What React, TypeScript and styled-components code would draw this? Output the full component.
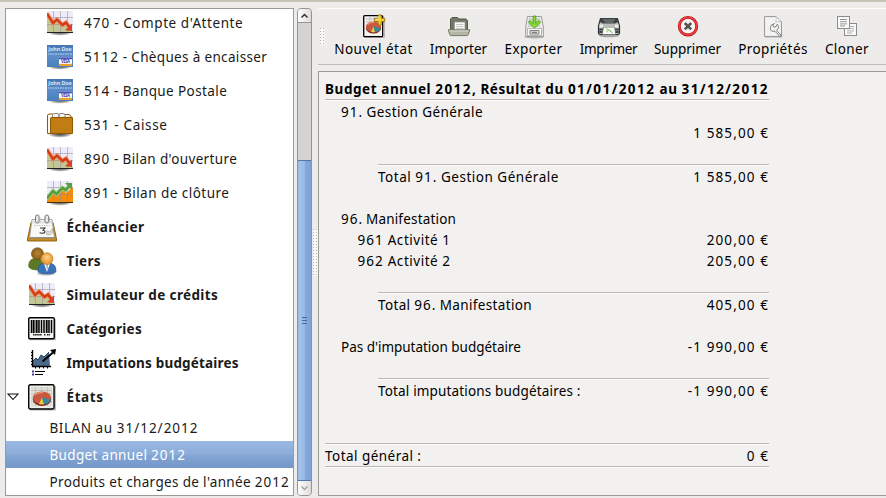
import React from 'react';
import styled, { createGlobalStyle, css } from 'styled-components';

const GlobalStyle = createGlobalStyle`
  * { box-sizing: border-box; }
  body { margin: 0; background: #edeceb; overflow: hidden; }
`;

const Window = styled.div`
  display: flex;
  width: 886px;
  height: 498px;
  padding: 6px 0 2px 5px;
  border-top: 2px solid #c5c2b8;
  background: #edeceb;
  font: 13.5px/21px "Noto Sans", "Open Sans", sans-serif;
  color: #000;
  white-space: pre;
`;

/* ---------- text ---------- */

const Tracked = styled.span<{ $track: number }>`
  letter-spacing: ${(p) => p.$track}px;
`;

type LabelProps = { text: string; track?: number; digits?: number };

function Label({ text, track = 0, digits = 1 }: LabelProps) {
  return (
    <span>
      {text.split(/([\d/]+)/).map((part, i) => (
        <Tracked key={i} $track={i % 2 ? digits : track}>{part}</Tracked>
      ))}
    </span>
  );
}

/* ---------- icons ---------- */

const Shadow = ({ cx = 13, cy = 21 }: { cx?: number; cy?: number }) => (
  <>
    <defs>
      <radialGradient id="shade">
        <stop offset="0" stopColor="#000" stopOpacity=".75" />
        <stop offset=".6" stopColor="#000" stopOpacity=".4" />
        <stop offset="1" stopColor="#000" stopOpacity="0" />
      </radialGradient>
    </defs>
    <ellipse cx={cx} cy={cy} rx="12.5" ry="3.8" fill="url(#shade)" />
  </>
);

const ChartGrid = () => (
  <path d="M6.5 0V21M13.5 0V21M20.5 0V21M0 6.5H26M0 13.5H26" stroke="#8a8896" strokeWidth=".8" opacity=".65" />
);

const ChartDown = () => (
  <svg width="26" height="25" viewBox="0 0 26 25">
    <Shadow />
    <rect width="26" height="22" fill="#efecfa" />
    <path d="M0 3L6 13L10 9L16 15L19 13L26 20V22H0Z" fill="#c3c795" />
    <ChartGrid />
    <path d="M0 2.5L6 12L10 8.5L15.5 14L19 11.5L23 17" fill="none" stroke="#ee8a62" strokeWidth="4" />
    <path d="M0 2.5L6 12L10 8.5L15.5 14L19 11.5L23 17" fill="none" stroke="#d33a12" strokeWidth="2.2" />
    <path d="M25 12.5L25 20L18 19.3Z" fill="#dd3f28" />
    <rect y="21" width="26" height="1" fill="#222" />
  </svg>
);

const ChartUp = () => (
  <svg width="26" height="25" viewBox="0 0 26 25">
    <Shadow />
    <rect width="26" height="22" fill="#efecfa" />
    <path d="M0 19L6 12L10 14.5L16 8.5L19 12L26 6V22H0Z" fill="#f58c0a" />
    <ChartGrid />
    <path d="M0 17.5L6 10L9.5 13L15.5 7L18.5 9L23 4.5" fill="none" stroke="#9ccb7d" strokeWidth="4.2" />
    <path d="M0 17.5L6 10L9.5 13L15.5 7L18.5 9L23 4.5" fill="none" stroke="#529a3b" strokeWidth="2.2" />
    <path d="M18 2H25V9Z" fill="#57a040" />
    <rect y="21" width="26" height="1" fill="#4a3312" />
  </svg>
);

const CardText = styled.text`
  font-family: "Noto Sans", sans-serif;
  font-weight: 700;
`;

const BankCard = () => (
  <svg width="26" height="25" viewBox="0 0 26 25">
    <defs>
      <linearGradient id="card" x1="0" y1="0" x2="0" y2="1">
        <stop offset="0" stopColor="#4577b5" />
        <stop offset=".5" stopColor="#5b8dca" />
        <stop offset="1" stopColor="#4a80b7" />
      </linearGradient>
    </defs>
    <Shadow />
    <rect width="26" height="22" fill="url(#card)" />
    <CardText x="1.3" y="5.6" fontSize="5.4" fill="#d3e6fa" textLength="23.5">John Doe</CardText>
    <path d="M1 9H25" stroke="#a9c6e6" strokeWidth="2" strokeDasharray="1.4 .7 2.2 .6" opacity=".65" />
    <rect x="12" y="12.5" width="13" height="8.5" fill="#fff" />
    <rect x="12" y="12.5" width="13" height="1.8" fill="#514fb5" />
    <rect x="12" y="18.8" width="13" height="2.2" fill="#eaa12c" />
    <CardText x="14" y="18.4" fontSize="4.4" fill="#3c3aa8" textLength="9">VISA</CardText>
  </svg>
);

const Wallet = () => (
  <svg width="26" height="25" viewBox="0 0 26 25">
    <Shadow />
    <path d="M.5 20.5V2L2 1H6V20.5Z" fill="#fffaf0" stroke="#8f5905" />
    <path d="M5.5 4V1.5L7 .5H11L12 2V4M12 4V1L13 .5H17L18 2V4" fill="#f2f2f2" stroke="#898989" />
    <path d="M18 1.5H22L24 3V5" fill="#fff3d5" stroke="#8f5905" />
    <path d="M3.5 20.5V5L5 4.5H25.5V20.5Z" fill="#c17d11" stroke="#8f5902" />
  </svg>
);

const Calendar = () => (
  <svg width="30" height="29" viewBox="0 0 30 29">
    <path d="M4 9.5H26L29.5 26V28H.5V26Z" fill="#c98a1f" stroke="#8d5a0a" strokeWidth=".9" />
    <path d="M5 6.5H25L27.5 24.5H2.5Z" fill="#f9f9f7" stroke="#8e8e8a" strokeWidth=".8" />
    <path d="M5 8H25L25.4 10.5H4.6Z" fill="#e0e0de" />
    <path d="M2.8 24.5H27.2V25.6H2.6Z" fill="#8d8c88" />
    <g stroke="#777" fill="#e9e9e9">
      <rect x="8.5" y="2" width="3.6" height="8" rx="1.8" />
      <rect x="18" y="2" width="3.6" height="8" rx="1.8" />
    </g>
    <path d="M12.8 4V9M22.3 4V9" stroke="#b3b3b3" />
    <path d="M7 12.5H23" stroke="#aaa" strokeDasharray="1.5 1" strokeWidth=".7" />
    <path d="M13 15H18L16 17.2Q19 18 17.5 19.7Q15.5 20.6 12.6 19.8" fill="none" stroke="#333" strokeWidth="1.1" />
    <path d="M19.5 21.5L20 17.5L22.5 19L25.5 15.5V20Q24 22.5 19.5 21.5Z" fill="#dedfda" stroke="#aaa" strokeWidth=".7" />
  </svg>
);

const People = () => (
  <svg width="29" height="29" viewBox="0 0 29 29">
    <defs>
      <radialGradient id="face" cx=".5" cy=".4"><stop offset="0" stopColor="#ffd38a" /><stop offset="1" stopColor="#e79a35" /></radialGradient>
      <radialGradient id="faceDark" cx=".5" cy=".45"><stop offset="0" stopColor="#b88739" /><stop offset="1" stopColor="#895f18" /></radialGradient>
    </defs>
    <ellipse cx="18" cy="26.6" rx="9" ry="2" fill="#000" opacity=".25" />
    <path d="M.8 20C.4 14 3 11.5 8 11.5C13 11.5 16 14 16 22.5C10 23.5 3 23.2 .8 20Z" fill="#5c7a26" stroke="#49631a" strokeWidth=".7" />
    <circle cx="9.5" cy="6.8" r="6" fill="url(#faceDark)" stroke="#76500e" strokeWidth=".7" />
    <path d="M10.2 25C9.5 18 12.5 16 19 16C25.5 16 28.3 18.5 27.8 25C24 27.5 14 27.5 10.2 25Z" fill="#3972b9" stroke="#24508f" strokeWidth=".7" />
    <path d="M16 16.5L19 25L22 16.5Z" fill="#fff" />
    <path d="M18.2 17.5H20L19.4 24Z" fill="#7aa1d4" />
    <circle cx="19" cy="11.7" r="5.9" fill="url(#face)" stroke="#c27c1e" strokeWidth=".8" />
  </svg>
);

const Barcode = () => (
  <svg width="28" height="24" viewBox="0 0 28 24">
    <path d="M27.4 2V22.6H2" fill="none" stroke="#999" strokeWidth="1.2" opacity=".6" />
    <rect x=".75" y=".75" width="25.5" height="21" rx="1.2" fill="#f5f5f3" stroke="#000" strokeWidth="1.4" />
    <path d="M3.5 3V16M5.5 3V16M8.5 3V16M11 3V16M13.5 3V16M16 3V16M18.5 3V16M21 3V16M23.5 3V16" stroke="#000" strokeWidth="1.5" />
    <path d="M6.8 3V16M9.8 3V16M19.8 3V16" stroke="#000" strokeWidth=".7" />
    <path d="M5 17.8H14M16 17.8H17.5M19 17.8H22" stroke="#222" strokeWidth="1.6" strokeDasharray="1.6 .5" />
  </svg>
);

const BudgetChart = () => (
  <svg width="30" height="28" viewBox="-4 0 30 28">
    <path d="M2 17V12L5 9L7 11L10 6L13 8L18 3L19 17Z" fill="#4b6a8b" />
    <path d="M2 12L5 9L7 11L10 6L13 8L18 3" fill="none" stroke="#26415f" />
    <path d="M1.5 1V17.5H20" fill="none" stroke="#000" strokeWidth="1.4" />
    <path d="M0 3.5H1.5M0 6.5H1.5M0 9.5H1.5M0 12.5H1.5M0 15.5H1.5M4.5 18V19.5M8.5 18V19.5M12.5 18V19.5M16.5 18V19.5" stroke="#000" />
    <path d="M11.5 12.5L22 3.5" stroke="#000" strokeWidth="2" />
    <path d="M19 1L25 0L24 6Z" fill="#000" />
    <path d="M1 22.5H3M1 25.5H3" stroke="#4c3c93" strokeWidth="1.8" />
    <path d="M4 22.5H14M4 25.5H12" stroke="#000" strokeWidth="1.1" />
  </svg>
);

const PieBody = () => (
  <>
    <ellipse cx="14" cy="15.5" rx="9.2" ry="6.5" fill="#86271b" />
    <ellipse cx="14" cy="13.7" rx="9.2" ry="6.3" fill="#cb583c" />
    <path d="M14 13.5L11 20Q13 20.8 16 20.3Z" fill="#edc94e" />
    <path d="M14 13.5L16 20.3Q21.5 19.5 22.8 15.5Z" fill="#2f8b9d" />
    <path d="M7 11Q10 8 15 8.6" fill="none" stroke="#e59377" strokeWidth="1.3" />
  </>
);

const PieReport = () => (
  <svg width="28" height="27" viewBox="0 0 28 27">
    <path d="M27.3 2V25.8H2" fill="none" stroke="#888" strokeWidth="1.3" opacity=".6" />
    <rect x=".75" y=".75" width="25.3" height="24.2" rx="1.4" fill="#eeeeeb" stroke="#000" strokeWidth="1.4" />
    <rect x="3" y="3" width="21" height="19.5" fill="#deded9" />
    <path d="M3 6.5H24M3 10H24M3 14H24M3 18H24M7.5 3V22M13.5 3V22M19.5 3V22" stroke="#bcbcb7" strokeWidth=".8" />
    <PieBody />
  </svg>
);

const NewReport = () => (
  <svg width="24" height="25" viewBox="0 0 24 25">
    <path d="M2.5 23.5H22.5V5" fill="none" stroke="#999" opacity=".6" />
    <rect x="1.7" y="1.7" width="19" height="21" rx="1" fill="#f2f2f0" stroke="#000" strokeWidth="1.3" />
    <path d="M4 5H13M4 8H15M8 3V10M12 3V9" stroke="#bbb" />
    <g transform="translate(0 1.5) scale(.82)"><PieBody /></g>
    <path d="M16 1.5H19V4.8H22.5V8H19V11.5H16V8H12.5V4.8H16Z" fill="#f7cf32" stroke="#9c7200" strokeWidth=".9" transform="translate(.2 -.5)" />
    <path d="M16.8 2.2V5.4H13.5" fill="none" stroke="#fff1a0" strokeWidth=".8" />
  </svg>
);

const ImportFolder = () => (
  <svg width="24" height="25" viewBox="0 0 24 25">
    <path d="M3.5 18V5L5 3.5H10.5L12 5H19L20.5 6.5V18Z" fill="#73776a" stroke="#555949" />
    <path d="M7.5 8H18V19H7.5Z" fill="#fafafa" stroke="#999b90" strokeWidth=".8" />
    <path d="M9 10.5H16.5M9 12.5H16.5M9 14.5H16.5" stroke="#c0c1bd" strokeWidth=".9" />
    <path d="M1.2 15.8H22.8L21.3 20.5Q21 21.6 20 21.6H4Q3 21.6 2.7 20.5Z" fill="#b3b6a3" stroke="#777a69" />
    <path d="M2.5 17H21.5" stroke="#dadbcf" />
  </svg>
);

const ExportDrive = () => (
  <svg width="24" height="25" viewBox="0 0 24 25">
    <ellipse cx="12.5" cy="23" rx="10" ry="1.5" fill="#000" opacity=".25" />
    <path d="M5.5 2.5H19.5L21.3 13V22.5H3.7V13Z" fill="#ecebe9" stroke="#9d9e9a" />
    <path d="M7 4H18V13H6Z" fill="#cfcfcd" />
    <rect x="5.5" y="14.5" width="14" height="7" fill="#f7f7f6" stroke="#aaaba7" strokeWidth=".8" />
    <path d="M8 16.5H17V20H8Z" fill="#e0e0de" stroke="#666" strokeWidth=".8" />
    <path d="M10 18.3H15" stroke="#666" />
    <path d="M11.2 2H13.8V9.6L17.2 6.6L18.6 8.2L12.5 14L6.4 8.2L7.8 6.6L11.2 9.6Z" fill="#85dd36" stroke="#49a506" strokeWidth=".9" />
  </svg>
);

const Printer = () => (
  <svg width="24" height="25" viewBox="0 0 24 25">
    <ellipse cx="12" cy="21.5" rx="10" ry="1.8" fill="#000" opacity=".3" />
    <path d="M3.5 4.5H20.5L22.5 12V19Q22.5 20.5 21 20.5H3Q1.5 20.5 1.5 19V12Z" fill="#babdb9" stroke="#2f3335" strokeWidth="1.2" />
    <path d="M3 4H21V8L18 9.5H6L3 8Z" fill="#3b4042" />
    <path d="M6 6H18M7.5 8H16.5" stroke="#93999a" strokeWidth=".9" />
    <path d="M2.5 10.5H6V12H18V10.5H21.5V13.5H2.5Z" fill="#ececeb" />
    <path d="M2.2 15.5H6M18 15.5H21.8M2.2 18H6M18 18H21.8" stroke="#3e4244" strokeWidth="2" />
    <path d="M6.5 13H17.5L18.8 20.5H5.2Z" fill="#f8fcf4" stroke="#676a68" strokeWidth=".8" />
    <path d="M9 14.5L13 16.5L15.5 19M9.5 18L11 16.5" stroke="#a5d48b" strokeWidth="1.2" />
  </svg>
);

const DeleteCircle = () => (
  <svg width="24" height="25" viewBox="0 0 24 25">
    <circle cx="12" cy="12.2" r="8.8" fill="#f7f4f3" stroke="#b80f16" strokeWidth="2.9" />
    <circle cx="12" cy="12.2" r="8.8" fill="none" stroke="#ee3c3c" strokeWidth="1.7" />
    <path d="M8.8 9L15.2 15.4M15.2 9L8.8 15.4" stroke="#555753" strokeWidth="2.6" />
  </svg>
);

const PropertiesSheet = () => (
  <svg width="24" height="25" viewBox="0 0 24 25">
    <path d="M4 23H21.5" stroke="#aaa" strokeWidth="1.4" opacity=".6" />
    <path d="M3.5 2.5H15L20.5 8V22.5H3.5Z" fill="#ececea" stroke="#9c9d9a" />
    <path d="M5 4H14.5L19 8.5V21H5Z" fill="#f7f7f6" opacity=".7" />
    <path d="M15 2.5Q15.8 6 14.7 8Q18 6.9 20.5 8Z" fill="#fff" stroke="#b0b1ad" strokeWidth=".7" />
    <path d="M13.5 9.5L11.8 11.2L13 13.2L15.2 12.5L16.2 10.2Q19.4 13.5 15.4 16.6L20.2 21.1L18.8 22.3L13.8 17.2Q9.4 18.3 9.2 14Q9.4 10.4 13.5 9.5Z" fill="#f0f0ef" stroke="#777975" strokeWidth=".9" />
  </svg>
);

const CloneSheets = () => (
  <svg width="24" height="25" viewBox="0 0 24 25">
    <rect x="9.5" y="9.5" width="12" height="12" fill="#fafafa" stroke="#8c8d8a" />
    <path d="M12 12.5H19M12 14.7H19M12 16.9H19M12 19H17" stroke="#a5a6a3" strokeWidth=".9" />
    <rect x="2.5" y="2.5" width="12" height="12" fill="#fafafa" stroke="#8c8d8a" />
    <path d="M5 5.5H12M5 7.7H12M5 9.9H12M5 11.9H10" stroke="#8b8c89" strokeWidth=".9" />
  </svg>
);

/* ---------- navigation tree ---------- */

const TreePanel = styled.nav`
  width: 289px;
  height: 488px;
  border: 1px solid #9c9a96;
  background: #fff;
  overflow: hidden;
  color: #1a1a1a;
`;

const TreeList = styled.div`
  margin-top: -3px;
`;

const TreeRow = styled.div<{ $section?: boolean }>`
  display: flex;
  align-items: center;
  height: 34px;
  padding-left: ${(p) => (p.$section ? 1 : 41)}px;
  ${(p) => p.$section && css`font-weight: 700;`}
`;

const IconCell = styled.span<{ $wide?: boolean }>`
  display: flex;
  flex: none;
  justify-content: center;
  width: ${(p) => (p.$wide ? 30 : 26)}px;
  margin-right: ${(p) => (p.$wide ? 9.5 : 11)}px;
  svg { display: block; }
`;

const Expander = styled.span`
  display: flex;
  flex: none;
  width: 20px;
  svg { display: block; }
`;

const ReportRow = styled.div<{ $selected?: boolean }>`
  display: flex;
  align-items: center;
  height: 27px;
  padding: 2px 0 0 43.5px;
  ${(p) => p.$selected && css`
    color: #fff;
    background: linear-gradient(#9ab8e2, #8bacd9 50%, #84a6d5 50%, #7397ca);
  `}
`;

const accounts = [
  { icon: <ChartDown />, text: "470 - Compte d'Attente", track: 0.57 },
  { icon: <BankCard />, text: '5112 - Chèques à encaisser', track: 0.34 },
  { icon: <BankCard />, text: '514 - Banque Postale', track: 0.4 },
  { icon: <Wallet />, text: '531 - Caisse', track: 0.65 },
  { icon: <ChartDown />, text: "890 - Bilan d'ouverture", track: 0.36 },
  { icon: <ChartUp />, text: '891 - Bilan de clôture', track: 0.47 },
];

const sections = [
  { icon: <Calendar />, text: 'Échéancier', track: 0.48 },
  { icon: <People />, text: 'Tiers', track: 0.36 },
  { icon: <ChartDown />, text: 'Simulateur de crédits', track: 0.37 },
  { icon: <Barcode />, text: 'Catégories', track: 0.3 },
  { icon: <BudgetChart />, text: 'Imputations budgétaires', track: 0.18 },
  { icon: <PieReport />, text: 'États', track: 0.6, open: true },
];

const reports = [
  { text: 'BILAN au 31/12/2012', track: 0.55 },
  { text: 'Budget annuel 2012', track: 0.33, selected: true },
  { text: "Produits et charges de l'année 2012", track: 0.34 },
];

/* ---------- scrollbar and splitter ---------- */

const Scrollbar = styled.div`
  display: flex;
  flex-direction: column;
  width: 15px;
  height: 488px;
  margin-left: 3px;
  border: 1px solid #96948f;
  border-radius: 4px;
  background: #d5d4d2;
  overflow: hidden;
`;

const ScrollButton = styled.div<{ $bottom?: boolean }>`
  display: flex;
  align-items: center;
  justify-content: center;
  height: 14px;
  flex: none;
  background: linear-gradient(90deg, #fdfdfd, #dedddb);
  border: 0 solid #96948f;
  border-bottom-width: ${(p) => (p.$bottom ? 0 : 1)}px;
`;

const ScrollTrack = styled.div`
  flex: 1;
`;

const ScrollThumb = styled.div`
  display: flex;
  align-items: center;
  justify-content: center;
  height: 321px;
  margin: 0 -1px;
  border: 1px solid #4f78ab;
  background: linear-gradient(90deg, #93b5e1, #a5c2e8 12%, #98b9e3 50%, #86aadb 52%, #7da2d6);
`;

const Splitter = styled.div`
  display: flex;
  align-items: center;
  justify-content: center;
  width: 6px;
  svg { display: block; flex: none; margin-top: 1px; }
`;

const dotPattern = (id: string) => (
  <pattern id={id} width="3" height="3" patternUnits="userSpaceOnUse">
    <rect width="3" height="3" fill="#f8f7f6" />
    <rect width="1" height="1" fill="#b5b3af" />
  </pattern>
);

/* ---------- toolbar ---------- */

const Main = styled.main`
  display: flex;
  flex: 1;
  flex-direction: column;
  gap: 6px;
  height: 488px;
`;

const Toolbar = styled.div`
  display: flex;
  flex: none;
  gap: 17px;
  height: 57px;
  padding-top: 5px;
  border-top: 1px solid #fbfbfa;
  border-bottom: 1px solid #bdbbb7;
`;

const Grip = styled.span`
  width: 6px;
  margin: 14px -9px 0 2px;
  svg { display: block; }
`;

const ToolButton = styled.div<{ $width: number }>`
  display: flex;
  flex: none;
  flex-direction: column;
  align-items: center;
  width: ${(p) => p.$width}px;
  svg { display: block; }
`;

const tools = [
  { icon: <NewReport />, text: 'Nouvel état', track: 0.5, width: 79 },
  { icon: <ImportFolder />, text: 'Importer', track: 0, width: 57 },
  { icon: <ExportDrive />, text: 'Exporter', track: 0.4, width: 59 },
  { icon: <Printer />, text: 'Imprimer', track: -0.35, width: 57 },
  { icon: <DeleteCircle />, text: 'Supprimer', track: 0, width: 67 },
  { icon: <PropertiesSheet />, text: 'Propriétés', track: 0.4, width: 70 },
  { icon: <CloneSheets />, text: 'Cloner', track: 0.4, width: 44 },
];

/* ---------- report ---------- */

const ReportFrame = styled.section`
  flex: 1;
  padding: 7px 0 0 6px;
  border: 1px solid #9c9a96;
  border-right: 0;
  background: #f2f1f0;
`;

const ReportBody = styled.div`
  width: 444px;
`;

const Title = styled.h1`
  height: 20px;
  margin: 0;
  font-size: inherit;
  line-height: 20px;
  font-weight: 700;
`;

const Line = styled.div<{ $indent?: number }>`
  display: flex;
  justify-content: space-between;
  height: 21px;
  padding-left: ${(p) => p.$indent ?? 0}px;
`;

const GrandTotal = styled(Line)`
  line-height: 23px;
`;

const Rule = styled.hr<{ $indent?: number; $after?: number }>`
  height: 2px;
  margin: 0 0 ${(p) => p.$after ?? 0}px ${(p) => p.$indent ?? 0}px;
  border: 0;
  background: linear-gradient(#bab8b5 50%, #fbfbfa 50%);
`;

const Space = styled.div<{ $height: number }>`
  height: ${(p) => p.$height}px;
`;

const Amount = ({ text }: { text: string }) => <Label text={text} track={1.1} digits={1.1} />;

export default function App() {
  return (
    <>
      <GlobalStyle />
      <Window>
        <TreePanel>
          <TreeList>
            {accounts.map((a) => (
              <TreeRow key={a.text}>
                <IconCell>{a.icon}</IconCell>
                <Label text={a.text} track={a.track} />
              </TreeRow>
            ))}
            {sections.map((s) => (
              <TreeRow key={s.text} $section>
                <Expander>
                  {s.open && (
                    <svg width="12" height="8" viewBox="0 0 12 8">
                      <path d="M1 1H11L6 6.5Z" fill="#fff" stroke="#111" strokeWidth="1.1" />
                    </svg>
                  )}
                </Expander>
                <IconCell $wide>{s.icon}</IconCell>
                <Label text={s.text} track={s.track} />
              </TreeRow>
            ))}
            {reports.map((r) => (
              <ReportRow key={r.text} $selected={r.selected}>
                <Label text={r.text} track={r.track} />
              </ReportRow>
            ))}
          </TreeList>
        </TreePanel>

        <Scrollbar>
          <ScrollButton>
            <svg width="9" height="6" viewBox="0 0 9 6">
              <path d="M1.5 4.5L4.5 1.5L7.5 4.5" fill="none" stroke="#333" strokeWidth="1.5" />
            </svg>
          </ScrollButton>
          <ScrollTrack />
          <ScrollThumb>
            <svg width="5" height="7" viewBox="0 0 5 7">
              <path d="M0 .5H5M0 3.5H5M0 6.5H5" stroke="#44699c" />
            </svg>
          </ScrollThumb>
          <ScrollButton $bottom>
            <svg width="9" height="6" viewBox="0 0 9 6">
              <path d="M1.5 1.5L4.5 4.5L7.5 1.5" fill="none" stroke="#a3a19d" strokeWidth="1.3" />
            </svg>
          </ScrollButton>
        </Scrollbar>

        <Splitter>
          <svg width="5" height="47">
            <defs>{dotPattern('splitDots')}</defs>
            <rect width="5" height="47" fill="url(#splitDots)" />
          </svg>
        </Splitter>

        <Main>
          <Toolbar>
            <Grip>
              <svg width="5" height="17">
                <defs>{dotPattern('gripDots')}</defs>
                <rect width="5" height="17" fill="url(#gripDots)" />
              </svg>
            </Grip>
            {tools.map((t) => (
              <ToolButton key={t.text} $width={t.width}>
                {t.icon}
                <Label text={t.text} track={t.track} />
              </ToolButton>
            ))}
          </Toolbar>

          <ReportFrame>
            <ReportBody>
              <Title>
                <Label text="Budget annuel 2012, Résultat du 01/01/2012 au 31/12/2012" track={0.57} digits={1.45} />
              </Title>
              <Rule $after={1} />
              <Line $indent={16}><Label text="91. Gestion Générale" track={0.43} /></Line>
              <Line><span /><Amount text="1 585,00 €" /></Line>
              <Space $height={20} />
              <Rule $indent={53} $after={1} />
              <Line $indent={53}><Label text="Total 91. Gestion Générale" track={0.52} /><Amount text="1 585,00 €" /></Line>
              <Space $height={21} />
              <Line $indent={16}><Label text="96. Manifestation" track={0.19} /></Line>
              <Line $indent={32.5}><Label text="961 Activité 1" track={0.53} /><Amount text="200,00 €" /></Line>
              <Line $indent={32.5}><Label text="962 Activité 2" track={0.53} /><Amount text="205,00 €" /></Line>
              <Space $height={20} />
              <Rule $indent={53} $after={1} />
              <Line $indent={53}><Label text="Total 96. Manifestation" track={0.36} /><Amount text="405,00 €" /></Line>
              <Space $height={21} />
              <Line $indent={16}><Label text="Pas d'imputation budgétaire" track={-0.02} /><Amount text="-1 990,00 €" /></Line>
              <Space $height={20} />
              <Rule $indent={53} $after={1} />
              <Line $indent={53}><Label text="Total imputations budgétaires :" track={0.16} /><Amount text="-1 990,00 €" /></Line>
              <Space $height={41} />
              <Rule />
              <GrandTotal><Label text="Total général :" track={0.46} /><Amount text="0 €" /></GrandTotal>
              <Rule />
            </ReportBody>
          </ReportFrame>
        </Main>
      </Window>
    </>
  );
}
